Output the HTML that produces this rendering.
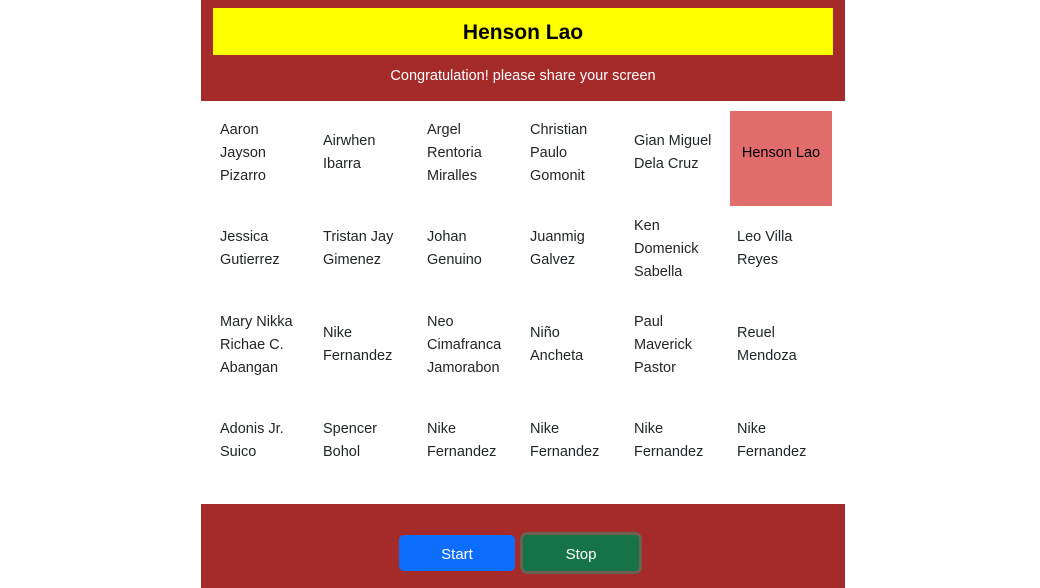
<!DOCTYPE html>
<html><head><meta charset="utf-8"><style>
*{margin:0;padding:0;box-sizing:border-box}
body{width:1040px;height:588px;background:#fff;position:relative;overflow:hidden;font-family:"Liberation Sans",sans-serif;color:#212529}
.hdr{position:absolute;left:201px;top:0;width:644px;height:101px;background:#a52a2a}
.yel{position:absolute;left:12px;top:8px;width:620px;height:47px;background:#ff0;display:flex;align-items:center;justify-content:center;font-size:21px;font-weight:bold;color:#000;padding-top:3px}
.sub{position:absolute;left:0;top:68px;width:644px;text-align:center;color:#fff;font-size:14.5px}
.c{position:absolute;width:102px;height:96px;display:flex;align-items:center;padding-left:7px;font-size:14.5px;line-height:23px;white-space:nowrap}
.hl{background:#e06c6c;justify-content:center;padding-left:0;color:#000;padding-bottom:11px}
.ftr{position:absolute;left:201px;top:504px;width:644px;height:84px;background:#a52a2a}
.b{position:absolute;top:31px;height:36px;border-radius:5px;color:#fff;font-size:15px;display:flex;align-items:center;justify-content:center;padding-top:2px}
</style></head><body>
<div class="hdr"><div class="yel">Henson Lao</div><div class="sub">Congratulation! please share your screen</div></div>

<div class="c" style="left:213px;top:105px">Aaron<br>Jayson<br>Pizarro</div>
<div class="c" style="left:316px;top:105px">Airwhen<br>Ibarra</div>
<div class="c" style="left:420px;top:105px">Argel<br>Rentoria<br>Miralles</div>
<div class="c" style="left:523px;top:105px">Christian<br>Paulo<br>Gomonit</div>
<div class="c" style="left:627px;top:105px">Gian Miguel<br>Dela Cruz</div>
<div class="c hl" style="left:730px;top:111px;height:95px">Henson Lao</div>

<div class="c" style="left:213px;top:201px">Jessica<br>Gutierrez</div>
<div class="c" style="left:316px;top:201px">Tristan Jay<br>Gimenez</div>
<div class="c" style="left:420px;top:201px">Johan<br>Genuino</div>
<div class="c" style="left:523px;top:201px">Juanmig<br>Galvez</div>
<div class="c" style="left:627px;top:201px">Ken<br>Domenick<br>Sabella</div>
<div class="c" style="left:730px;top:201px">Leo Villa<br>Reyes</div>

<div class="c" style="left:213px;top:297px">Mary Nikka<br>Richae C.<br>Abangan</div>
<div class="c" style="left:316px;top:297px">Nike<br>Fernandez</div>
<div class="c" style="left:420px;top:297px">Neo<br>Cimafranca<br>Jamorabon</div>
<div class="c" style="left:523px;top:297px">Niño<br>Ancheta</div>
<div class="c" style="left:627px;top:297px">Paul<br>Maverick<br>Pastor</div>
<div class="c" style="left:730px;top:297px">Reuel<br>Mendoza</div>

<div class="c" style="left:213px;top:393px">Adonis Jr.<br>Suico</div>
<div class="c" style="left:316px;top:393px">Spencer<br>Bohol</div>
<div class="c" style="left:420px;top:393px">Nike<br>Fernandez</div>
<div class="c" style="left:523px;top:393px">Nike<br>Fernandez</div>
<div class="c" style="left:627px;top:393px">Nike<br>Fernandez</div>
<div class="c" style="left:730px;top:393px">Nike<br>Fernandez</div>

<div class="ftr">
<div class="b" style="left:198px;width:116px;background:#0d6efd">Start</div>
<div class="b" style="left:319px;top:28px;width:122px;height:42px;background:#157347;border:3px solid #6b6052;border-radius:7px">Stop</div>
</div>
</body></html>
